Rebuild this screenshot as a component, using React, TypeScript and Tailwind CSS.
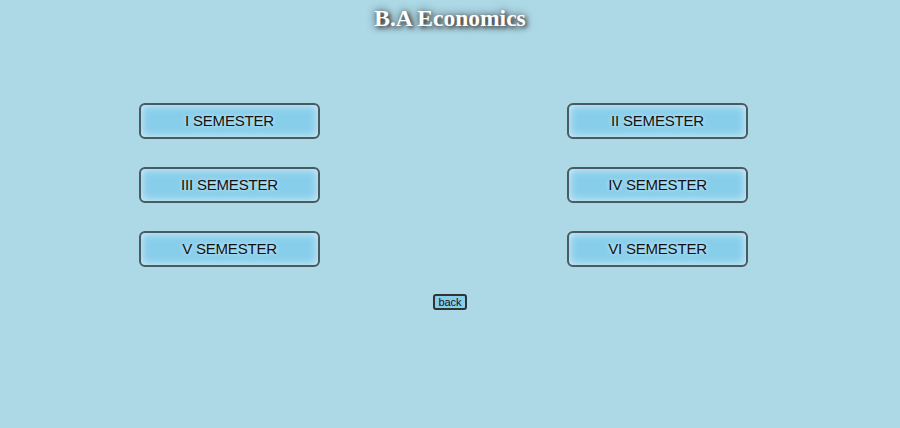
const semesters = [
  ["I SEMESTER", "II SEMESTER"],
  ["III SEMESTER", "IV SEMESTER"],
  ["V SEMESTER", "VI SEMESTER"],
];

const SemButton = ({ label }: { label: string }) => (
  <button className="w-[181px] h-[36px] rounded-[6px] border-2 border-[#4a5a60] bg-[#87ceeb] shadow-[inset_0_0_10px_rgba(255,255,255,0.7)] text-[15px] tracking-[-0.2px] text-[#111] [text-shadow:0_0_4px_rgba(255,255,255,0.8)] font-['Liberation_Sans',Arial,sans-serif]">
    {label}
  </button>
);

export default function App() {
  return (
    <div className="min-h-[428px] w-full bg-[#add8e6] flex flex-col items-center">
      <h1 className="mt-[3px] text-[23.5px] leading-[30px] font-bold text-white font-['Liberation_Serif','Times_New_Roman',serif] [text-shadow:0_0_8px_#333,2px_2px_4px_#444]">
        B.A Economics
      </h1>
      <div className="mt-[70px] flex flex-col gap-[28px] w-full">
        {semesters.map(([a, b]) => (
          <div key={a} className="flex w-full">
            <div className="pl-[139px]">
              <SemButton label={a} />
            </div>
            <div className="pl-[247px]">
              <SemButton label={b} />
            </div>
          </div>
        ))}
      </div>
      <button className="mt-[27px] px-[3px] h-[16px] leading-[12px] rounded-[3px] border-2 border-[#333] bg-[#87ceeb] text-[11px] text-[#111] font-['Liberation_Sans',Arial,sans-serif]">
        back
      </button>
    </div>
  );
}
